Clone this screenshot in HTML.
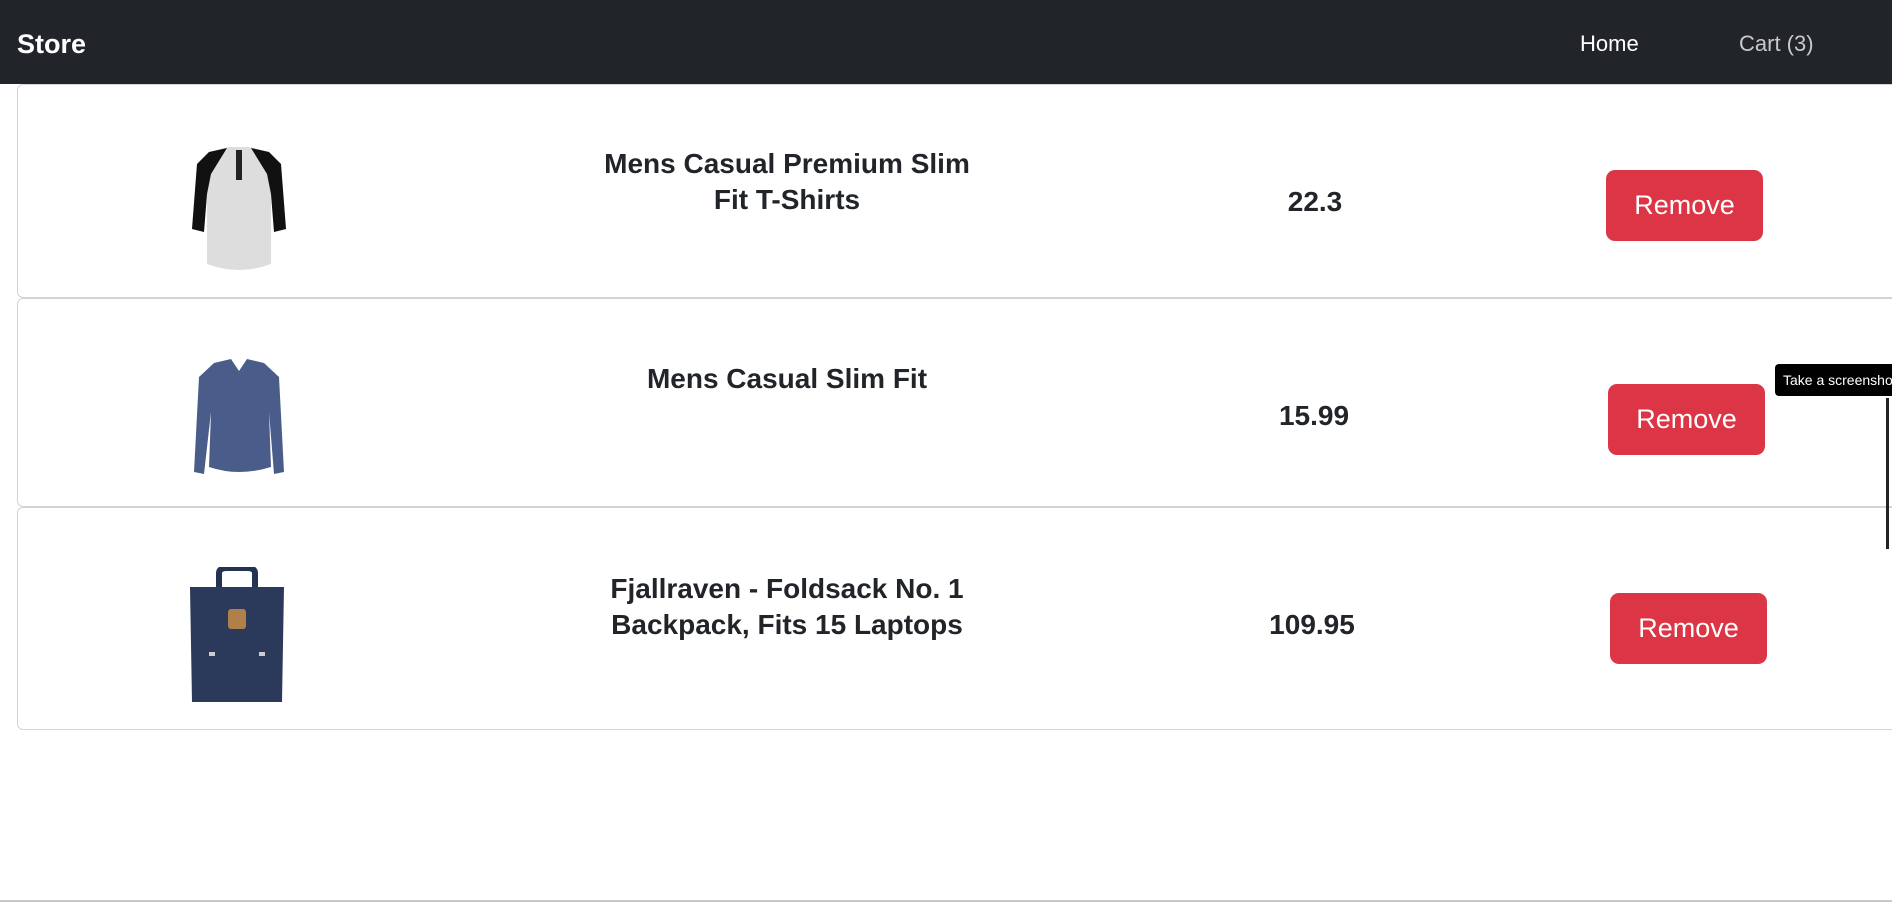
<!DOCTYPE html>
<html><head><meta charset="utf-8"><style>
*{box-sizing:border-box;margin:0;padding:0}
body{width:1892px;height:905px;overflow:hidden;background:#fff;font-family:"Liberation Sans",sans-serif;color:#212529;position:relative}
.nav{position:absolute;left:0;top:0;width:1892px;height:84px;background:#212529}
.brand{position:absolute;left:17px;top:29px;font-size:27px;font-weight:bold;color:#fff}
.nl{position:absolute;top:31px;font-size:22px}
.card{position:absolute;left:17px;width:1900px;border:1px solid #d3d3d3;border-radius:6px;background:#fff}
.t{position:absolute;width:480px;text-align:center;font-size:28px;font-weight:bold;line-height:36px}
.p{position:absolute;width:200px;text-align:center;font-size:28px;font-weight:bold}
.b{position:absolute;width:157px;height:71px;background:#dc3545;border-radius:9px;color:#fff;font-size:27px;text-align:center;line-height:71px}
svg{position:absolute}
</style></head><body>
<div class="nav"><div class="brand">Store</div><div class="nl" style="left:1580px;color:#fff">Home</div><div class="nl" style="left:1739px;color:#c8c9ca">Cart (3)</div></div>

<div class="card" style="top:84px;height:214px"></div>
<div class="card" style="top:298px;height:209px"></div>
<div class="card" style="top:507px;height:223px"></div>

<svg style="left:189px;top:144px" width="100" height="130" viewBox="0 0 100 130">
<path d="M20 8 L40 3 L60 3 L80 8 L92 20 L97 85 L85 88 L82 50 L82 120 Q50 132 18 120 L18 50 L15 88 L3 85 L8 20Z" fill="#ddd"/>
<path d="M20 8 L38 4 L22 30 L18 50 L15 88 L3 85 L8 20Z M80 8 L62 4 L78 30 L82 50 L85 88 L97 85 L92 20Z" fill="#111"/>
<rect x="47" y="6" width="6" height="30" fill="#222"/>
</svg>
<svg style="left:189px;top:357px" width="100" height="125" viewBox="0 0 100 125">
<path d="M25 6 L42 2 L50 14 L58 2 L75 6 L90 20 L95 115 L85 117 L80 55 L82 110 Q50 120 20 110 L22 55 L15 117 L5 115 L10 20Z" fill="#4a5d8a"/>
</svg>
<svg style="left:187px;top:567px" width="100" height="140" viewBox="0 0 100 140">
<path d="M32 20 L32 6 Q32 1 40 1 L60 1 Q68 1 68 6 L68 20" stroke="#243352" stroke-width="6" fill="none"/>
<path d="M3 20 L97 20 L95 135 L5 135Z" fill="#2b3a5a"/>
<rect x="41" y="42" width="18" height="20" rx="3" fill="#b0804a"/>
<rect x="22" y="85" width="6" height="4" fill="#ccc"/><rect x="72" y="85" width="6" height="4" fill="#ccc"/>
</svg>

<div class="t" style="left:547px;top:146px">Mens Casual Premium Slim<br>Fit T-Shirts</div>
<div class="p" style="left:1215px;top:186px">22.3</div>
<div class="b" style="left:1606px;top:170px">Remove</div>

<div class="t" style="left:547px;top:361px">Mens Casual Slim Fit</div>
<div class="p" style="left:1214px;top:400px">15.99</div>
<div class="b" style="left:1608px;top:384px">Remove</div>

<div class="t" style="left:547px;top:571px">Fjallraven - Foldsack No. 1<br>Backpack, Fits 15 Laptops</div>
<div class="p" style="left:1212px;top:609px">109.95</div>
<div class="b" style="left:1610px;top:593px">Remove</div>

<div style="position:absolute;left:1775px;top:364px;width:130px;height:32px;background:#000;border-radius:4px;color:#fff;font-size:14px;line-height:32px;padding-left:8px;white-space:nowrap;overflow:hidden">Take a screenshot</div>
<div style="position:absolute;left:1886px;top:398px;width:3px;height:151px;background:#222"></div>
<div style="position:absolute;left:0;top:900px;width:1892px;height:2px;background:#c8c8c8"></div>
</body></html>
